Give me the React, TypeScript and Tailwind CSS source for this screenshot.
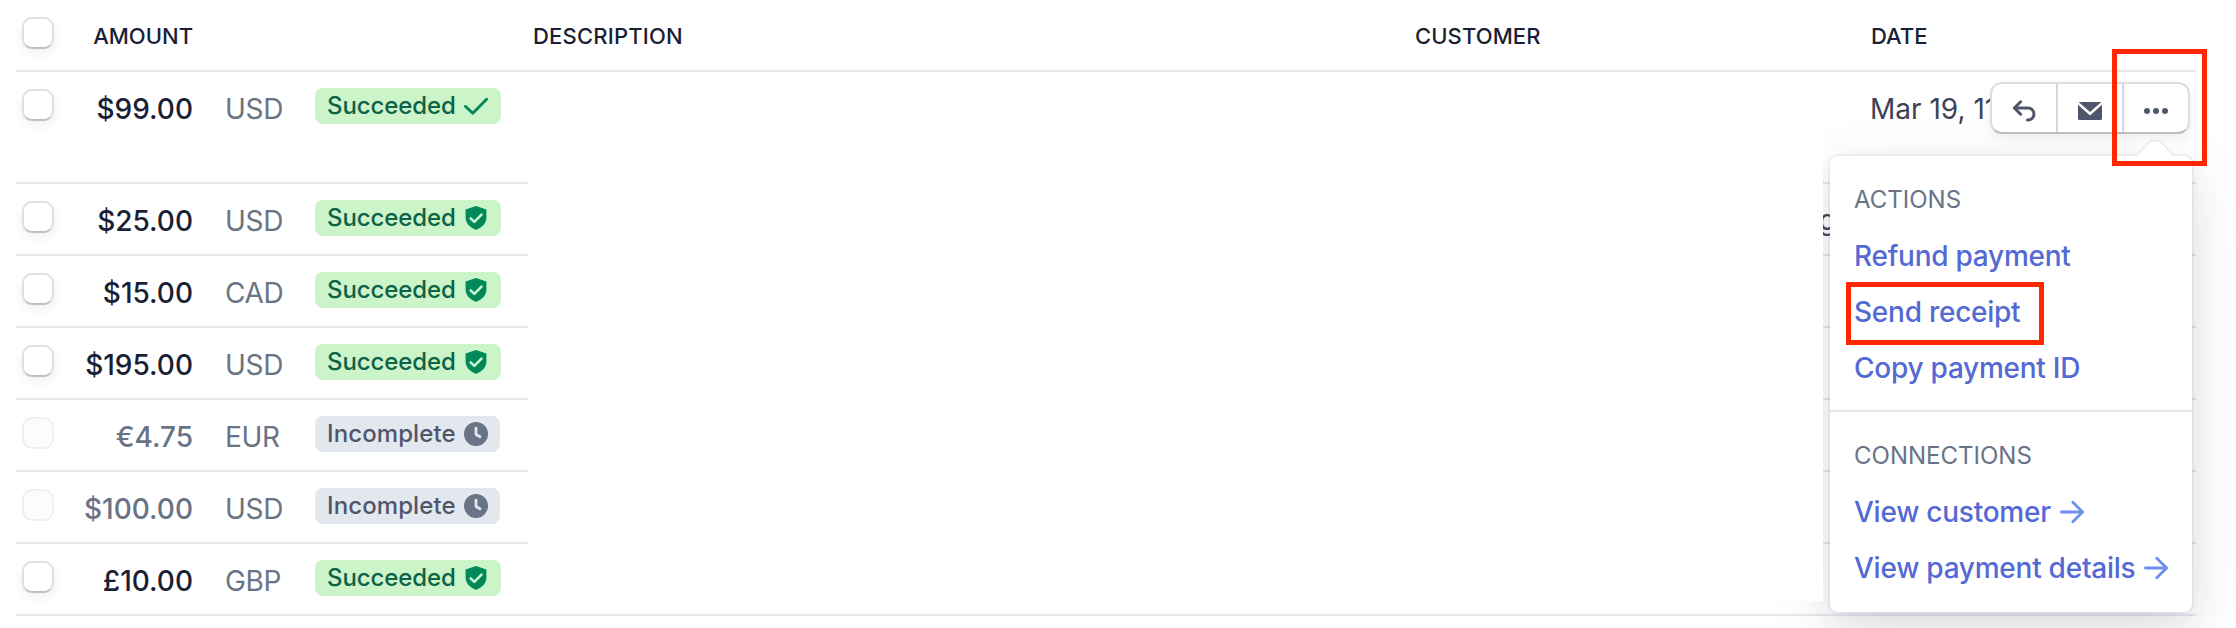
import { ReactNode } from 'react';
import clsx from 'clsx';

type Status = 'captured' | 'protected' | 'incomplete';

interface Payment {
  amount: string;
  currency: string;
  status: Status;
  date?: string;
}

const payments: Payment[] = [
  { amount: '$99.00', currency: 'USD', status: 'captured', date: 'Mar 19, 11' },
  { amount: '$25.00', currency: 'USD', status: 'protected' },
  { amount: '$15.00', currency: 'CAD', status: 'protected' },
  { amount: '$195.00', currency: 'USD', status: 'protected' },
  { amount: '€4.75', currency: 'EUR', status: 'incomplete' },
  { amount: '$100.00', currency: 'USD', status: 'incomplete' },
  { amount: '£10.00', currency: 'GBP', status: 'protected' },
];

function Checkbox({ disabled = false }: { disabled?: boolean }) {
  return (
    <span
      className={clsx(
        'mt-[17px] ml-1.5 size-8 shrink-0 rounded-[10px] border-2',
        disabled
          ? 'border-[#efeff1] bg-[#fbfcfe]'
          : 'border-[#dfdee3] border-b-[#c0bfc5] bg-white shadow-[0_4px_10px_rgba(60,66,87,0.08)]'
      )}
    />
  );
}

function StatusIcon({ status }: { status: Status }) {
  if (status === 'captured') {
    return (
      <svg viewBox="0 0 24 24" className="size-6" fill="none" stroke="#00875a" strokeWidth="2.8" strokeLinecap="round" strokeLinejoin="round">
        <path d="M1.4 12.4l7.4 6.8L22.6 5.2" />
      </svg>
    );
  }
  if (status === 'protected') {
    return (
      <svg viewBox="0 0 24 24" className="size-6">
        <path d="M12 0l10.4 3.6v8c0 5.4-4 9.9-10.4 12.4C5.6 21.5 1.6 17 1.6 11.6v-8z" fill="#00875a" />
        <path d="M6.6 12.4l3.7 3.5 7.2-7.2" fill="none" stroke="#cbf4c9" strokeWidth="2.6" strokeLinecap="round" strokeLinejoin="round" />
      </svg>
    );
  }
  return (
    <svg viewBox="0 0 24 24" className="size-6">
      <circle cx="12" cy="12" r="12" fill="#697386" />
      <path d="M12 6.2v6.4l4 2.2" fill="none" stroke="#e3e8ee" strokeWidth="2.8" strokeLinecap="round" strokeLinejoin="round" />
    </svg>
  );
}

function Badge({ status }: { status: Status }) {
  const incomplete = status === 'incomplete';
  return (
    <span
      className={clsx(
        'mt-4 flex h-9 items-center justify-between rounded-lg pl-3 text-2xl font-medium whitespace-nowrap',
        incomplete ? 'w-[185px] bg-[#e3e8ee] pr-3 text-[#4f566b]' : 'w-[186px] bg-[#cbf4c9] pr-[13px] text-[#0e6245]'
      )}
    >
      <span className={clsx('-mt-px', incomplete ? 'tracking-[0.1px]' : 'tracking-[-0.1px]')}>
        {incomplete ? 'Incomplete' : 'Succeeded'}
      </span>
      <StatusIcon status={status} />
    </span>
  );
}

function PaymentRow({ payment, tall }: { payment: Payment; tall: boolean }) {
  const muted = payment.status === 'incomplete';
  return (
    <div className={clsx('flex border-b-2 border-[#e3e8ee]', tall ? 'h-28' : 'h-[72px]')}>
      <Checkbox disabled={muted} />
      <span
        className={clsx(
          'mt-[17px] w-[139px] text-right text-[28px] leading-10 font-medium',
          muted ? 'text-[#697386]' : 'text-[#1a1f36]'
        )}
      >
        {payment.amount}
      </span>
      <span className="mt-[17px] ml-8 w-[90px] text-[28px] leading-10 tracking-[-0.3px] text-[#697386]">
        {payment.currency}
      </span>
      <Badge status={payment.status} />
      {payment.date && (
        <span className="mt-[17px] ml-[1369px] text-[28px] leading-10 whitespace-nowrap text-[#3c4257]">{payment.date}</span>
      )}
    </div>
  );
}

function RowActions() {
  return (
    <div className="absolute top-[82px] left-[1990px] flex h-[52px] w-[200px] divide-x-2 divide-[#d5d6de] rounded-xl border-2 border-[#dcdce2] border-b-[#bdbcc3] bg-white shadow-[0_4px_10px_rgba(60,66,87,0.08)]">
      <button className="flex w-[66px] items-center justify-center pt-1.5">
        <svg viewBox="0 0 24 24" className="size-6" fill="none" stroke="#4f566b" strokeWidth="3" strokeLinecap="round" strokeLinejoin="round">
          <path d="M8.6 2.8L2.3 9l6.3 6.2M2.6 9H16a6 6 0 0 1 0 12h-.6" />
        </svg>
      </button>
      <button className="flex w-[66px] items-center justify-center pt-1.5">
        <svg viewBox="0 0 24 24" className="size-6" fill="#4f566b">
          <path d="M.6 3h22.8L12 13z" />
          <path d="M0 5.8l12 10.7L24 5.8v13.7a1.5 1.5 0 0 1-1.5 1.5h-21A1.5 1.5 0 0 1 0 19.5z" />
        </svg>
      </button>
      <button className="flex flex-1 items-center justify-center pt-1.5">
        <svg viewBox="0 0 24 24" className="size-6" fill="#4f566b">
          <circle cx="3" cy="12" r="3" />
          <circle cx="12" cy="12" r="3" />
          <circle cx="21" cy="12" r="3" />
        </svg>
      </button>
    </div>
  );
}

function MenuHeading({ children }: { children: ReactNode }) {
  return <p className="text-2xl leading-[56px] text-[#697386]">{children}</p>;
}

function MenuLink({ children, arrow = false }: { children: ReactNode; arrow?: boolean }) {
  return (
    <a className="flex h-14 items-center gap-[9px] text-[28px] font-medium tracking-[-0.25px] whitespace-nowrap text-[#5469d4]">
      {children}
      {arrow && (
        <svg viewBox="0 0 24 24" className="size-6 shrink-0" fill="none" stroke="#6c8eef" strokeWidth="2.8" strokeLinecap="round" strokeLinejoin="round">
          <path d="M1.4 12h21M12.8 2.2l9.8 9.8-9.8 9.8" />
        </svg>
      )}
    </a>
  );
}

function ActionsMenu() {
  return (
    <div className="absolute top-[156px] left-[1830px] w-[362px] rounded-lg bg-white shadow-[0_0_0_2px_rgba(60,66,87,0.06),0_10px_30px_rgba(60,66,87,0.08),0_24px_70px_rgba(60,66,87,0.13)]">
      <svg viewBox="0 0 38 18" className="absolute -top-4 left-[306px] h-[18px] w-[38px]">
        <path d="M0 16C5 13 9 6 13 2.5c3.5-3 8.5-3 12 0C29 6 33 13 38 16v2H0z" fill="#fff" />
        <path d="M0 15.5C5 12.5 9 6 13 2.5c3.5-3 8.5-3 12 0C29 6 33 12.5 38 15.5" fill="none" stroke="#ebebee" strokeWidth="1.5" />
      </svg>
      <div className="border-b-2 border-[#e3e8ee] px-6 pt-4 pb-3.5">
        <MenuHeading>ACTIONS</MenuHeading>
        <MenuLink>Refund payment</MenuLink>
        <MenuLink>Send receipt</MenuLink>
        <MenuLink>Copy payment ID</MenuLink>
      </div>
      <div className="px-6 py-4">
        <MenuHeading>CONNECTIONS</MenuHeading>
        <MenuLink arrow>View customer</MenuLink>
        <MenuLink arrow>View payment details</MenuLink>
      </div>
    </div>
  );
}

export default function App() {
  return (
    <div className="relative h-[628px] w-[2236px] overflow-hidden bg-white font-['Inter',sans-serif]">
      <div className="ml-4 w-[2180px]">
        <div className="flex h-[72px] border-b-2 border-[#e3e8ee] text-[22px] leading-[72px] font-medium text-[#1a1f36]">
          <Checkbox />
          <span className="w-[139px] text-right">AMOUNT</span>
          <span className="ml-[340px] w-[882px] tracking-[0.2px]">DESCRIPTION</span>
          <span className="w-[456px] tracking-[0.1px]">CUSTOMER</span>
          <span>DATE</span>
        </div>
        {payments.map((payment, i) => (
          <PaymentRow key={i} payment={payment} tall={i === 0} />
        ))}
      </div>

      {/* tail of a customer value, mostly hidden by the menu */}
      <span className="absolute top-[200px] left-[1819px] text-[28px] leading-10 text-[#3c4257]">g</span>

      <ActionsMenu />
      <RowActions />

      {/* redacted description and customer cells */}
      <div className="absolute top-[100px] left-[528px] h-[501px] w-[1295px] bg-white" />

      {/* highlights */}
      <div className="absolute top-[49px] left-[2112px] h-[117px] w-[95px] border-5 border-[#ff2600]" />
      <div className="absolute top-[282px] left-[1846px] h-[63px] w-[198px] border-5 border-[#ff2600]" />
    </div>
  );
}
